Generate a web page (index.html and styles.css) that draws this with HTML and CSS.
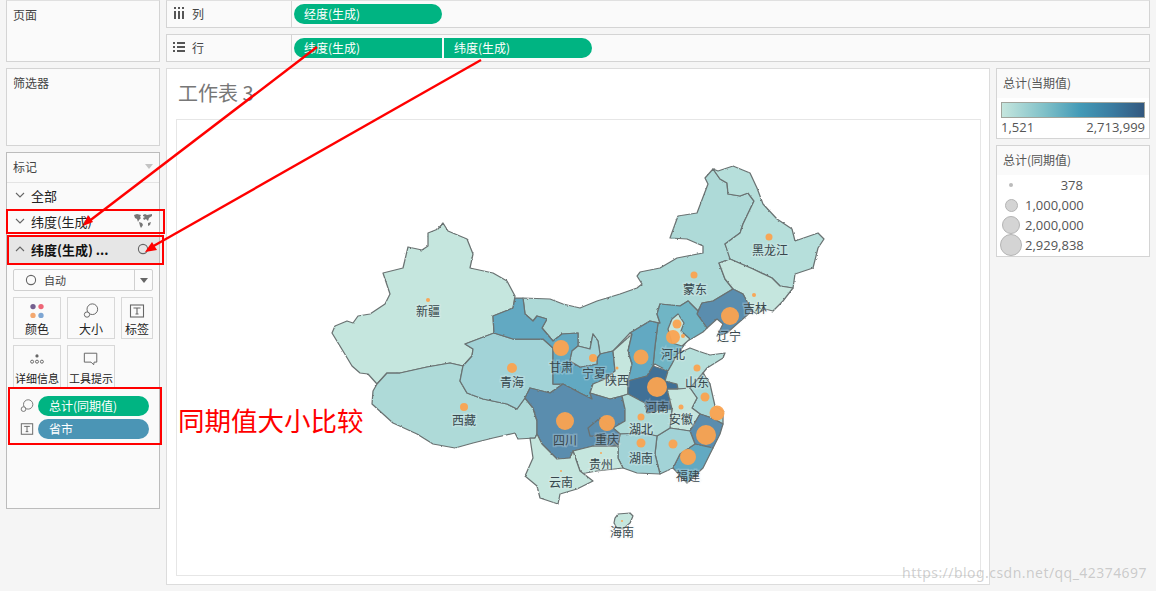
FILE: index.html
```html
<!DOCTYPE html>
<html lang="zh">
<head>
<meta charset="utf-8">
<title>工作表 3</title>
<link rel="stylesheet" href="styles.css">
</head>
<body>
<div class="app">
  <aside class="side">
    <section class="card pages"><h3 class="card-title">页面</h3></section>
    <section class="card filters"><h3 class="card-title">筛选器</h3></section>
    <section class="card marks">
      <div class="marks-head"><span>标记</span><i class="tri tri-light"></i></div>
      <div class="mark-row">
        <svg class="chev" viewBox="0 0 10 6"><path d="M1 1l4 4 4-4"/></svg><span>全部</span>
      </div>
      <div class="mark-row">
        <svg class="chev" viewBox="0 0 10 6"><path d="M1 1l4 4 4-4"/></svg><span>纬度(生成)</span>
        <svg class="world" viewBox="0 0 18 14"><path d="M0 1l3-1 4 1-1 2 1 1-2 2-1 2-1-3-2-1zM5 8l3 1 1 2-2 3-1-2zM9 1l2-1 2 1 5-1v2l-3 2-1 3-2-2-2 1-1-2 2-1-2-1zM14 9l3-1-1 3-2 1z"/></svg>
      </div>
      <div class="mark-row mark-row-active">
        <svg class="chev" viewBox="0 0 10 6"><path d="M1 5l4-4 4 4"/></svg><b>纬度(生成) ...</b>
        <svg class="ring" viewBox="0 0 12 12"><circle cx="6" cy="6" r="4.6"/></svg>
      </div>
      <div class="mark-body">
        <div class="select">
          <span class="select-label"><svg class="ring" viewBox="0 0 12 12"><circle cx="6" cy="6" r="4.6"/></svg>自动</span>
          <span class="select-btn"><i class="tri"></i></span>
        </div>
        <div class="tiles">
          <div class="tile tile-wide">
            <svg class="tile-icon" viewBox="0 0 18 18"><circle class="c1" cx="4.5" cy="4" r="3"/><circle class="c2" cx="13.5" cy="4" r="3"/><circle class="c3" cx="4.5" cy="14" r="3"/><circle class="c4" cx="13.5" cy="14" r="3"/></svg>
            <span>颜色</span>
          </div>
          <div class="tile tile-wide">
            <svg class="tile-icon line" viewBox="0 0 18 18"><circle cx="10.5" cy="7" r="6"/><circle class="fill-w" cx="4.5" cy="13" r="3"/></svg>
            <span>大小</span>
          </div>
          <div class="tile tile-narrow">
            <svg class="tile-icon line" viewBox="0 0 16 16"><rect x="1.5" y="2" width="13" height="12"/><path d="M5 5.5V5h6v.5M8 5v6M6.5 11h3"/></svg>
            <span>标签</span>
          </div>
          <div class="tile tile-wide tile-clip">
            <svg class="tile-icon line" viewBox="0 0 18 18"><circle class="fill-d" cx="9" cy="5.5" r="1.8"/><circle cx="3.5" cy="12" r="1.7"/><circle cx="9" cy="12" r="1.7"/><circle cx="14.5" cy="12" r="1.7"/></svg>
            <span>详细信息</span>
          </div>
          <div class="tile tile-wide tile-clip">
            <svg class="tile-icon line" viewBox="0 0 18 18"><path d="M1.500 2.500h14v10h-3l-.5 3-3-3h-7.500z"/></svg>
            <span>工具提示</span>
          </div>
        </div>
        <div class="pill-list">
          <div class="pill-row">
            <svg class="pill-icon line" viewBox="0 0 18 18"><circle cx="10.500" cy="7" r="6"/><circle class="fill-w" cx="4.500" cy="13" r="3"/></svg>
            <span class="pill pill-green">总计(同期值)</span>
          </div>
          <div class="pill-row">
            <svg class="pill-icon line" viewBox="0 0 16 16"><rect x="1.500" y="2" width="13" height="12"/><path d="M5 5.500V5h6v.5M8 5v6M6.500 11h3"/></svg>
            <span class="pill pill-blue">省市</span>
          </div>
        </div>
      </div>
    </section>
  </aside>

  <main class="work">
    <div class="shelf">
      <div class="shelf-name">
        <svg class="shelf-icon" viewBox="0 0 12 12"><path d="M1 4h2v8H1zM1 0h2v2H1zM5 4h2v8H5zM5 0h2v2H5zM9 4h2v8H9zM9 0h2v2H9z"/></svg><span>列</span>
      </div>
      <div class="shelf-pills"><span class="pill pill-green pill-shelf">经度(生成)</span></div>
    </div>
    <div class="shelf">
      <div class="shelf-name">
        <svg class="shelf-icon" viewBox="0 0 12 12"><path d="M0 1h2v2H0zM4 1h8v2H4zM0 5h2v2H0zM4 5h8v2H4zM0 9h2v2H0zM4 9h8v2H4z"/></svg><span>行</span>
      </div>
      <div class="shelf-pills">
        <span class="pill pill-green pill-shelf pill-left">纬度(生成)</span>
        <span class="pill pill-green pill-shelf pill-right">纬度(生成)</span>
      </div>
    </div>
    <div class="content">
      <section class="sheet">
        <h1 class="sheet-title">工作表 3</h1>
        <div class="map-frame">
          <svg class="map" viewBox="176 119 804 456" width="804" height="456">
            <defs>
              <filter id="rough" x="-2%" y="-2%" width="104%" height="104%">
                <feTurbulence type="fractalNoise" baseFrequency="0.3" numOctaves="2" seed="4"/>
                <feDisplacementMap in="SourceGraphic" scale="2" xChannelSelector="R" yChannelSelector="G"/>
              </filter>
            </defs>
            <g class="regions" filter="url(#rough)">
              <polygon class="p-a" points="443,222 448,230 467,238 473,253 470,267 493,272 507,280 515,295 513,307 493,315 494,332 465,343 473,348 472,355 463,365 450,362 427,366 400,372 387,372 377,383 368,373 360,372 352,365 343,350 332,332 335,325 347,320 353,322 358,315 370,313 385,303 390,293 383,272 403,267 408,246 422,249 428,245 428,232 438,228"/>
              <polygon class="p-c" points="377,383 387,372 400,372 427,366 450,362 463,365 460,380 467,392 483,398 507,403 517,408 525,397 533,407 537,420 537,433 535,437 518,438 515,432 493,437 473,442 455,447 433,443 417,433 393,422 372,403 373,390"/>
              <polygon class="p-d" points="465,343 494,332 513,338 543,338 553,347 553,383 563,383 550,392 530,387 525,397 517,408 507,403 483,398 467,392 460,380 463,365 472,355 473,348"/>
              <polygon class="p-c" points="523,297 550,298 563,303 580,307 597,300 620,293 637,287 642,283 637,275 640,271 660,267 677,257 703,252 703,245 687,238 670,237 678,215 697,212 708,183 705,177 713,168 720,178 727,182 728,193 740,195 748,192 754,200 743,223 740,232 725,243 733,257 719,262 725,278 733,288 713,300 702,302 698,310 688,300 680,305 660,303 657,313 660,322 650,320 630,332 613,350 600,353 598,340 593,333 590,348 578,345 578,332 562,333 553,340 542,327 547,318 537,315 533,320 525,313"/>
              <polygon class="p-g" points="515,297 523,297 525,313 533,320 537,315 547,318 542,327 553,340 562,333 578,332 578,345 572,350 570,360 580,366 587,365 597,363 597,357 600,353 613,350 615,370 605,378 593,383 590,392 592,398 580,392 567,385 563,383 553,383 553,347 543,338 513,338 494,332 493,315 513,307"/>
              <polygon class="p-d" points="578,345 590,348 593,333 598,340 600,353 597,357 597,363 587,365 580,366 570,360 572,350"/>
              <polygon class="p-a" points="632,333 628,350 632,363 628,380 628,393 622,395 610,398 590,392 593,383 605,378 615,370 613,350"/>
              <polygon class="p-b" points="713,168 718,170 733,165 750,172 757,187 763,203 777,218 792,228 795,240 818,232 824,238 818,247 813,267 795,273 793,287 780,285 772,277 753,268 730,258 725,243 740,232 743,223 754,200 748,192 740,195 728,193 727,182 720,178"/>
              <polygon class="p-a" points="719,262 730,258 753,268 772,277 780,285 793,287 783,300 773,310 765,308 757,313 752,310 743,293 733,288 725,278"/>
              <polygon class="p-h" points="733,288 743,293 752,310 737,323 727,332 717,335 723,323 717,318 707,327 697,313 702,302 713,300"/>
              <polygon class="p-f" points="657,313 660,303 680,305 688,300 698,310 697,313 707,327 703,331 693,337 687,340 680,350 672,363 668,370 655,363 653,365 655,345 658,322 660,322"/>
              <polygon class="p-a" points="672,318 678,313 684,322 681,330 690,338 682,345 672,342 668,328"/>
              <polygon class="p-g" points="630,332 650,320 658,322 655,345 653,365 647,375 628,380 632,363 628,350 632,333"/>
              <polygon class="p-h" points="525,397 530,387 550,392 563,383 567,385 580,392 592,398 590,392 610,398 622,395 625,408 625,420 613,427 620,433 618,445 593,445 573,450 570,457 557,458 542,443 537,433 537,420 533,407"/>
              <polygon class="p-i" points="628,380 647,375 653,365 668,370 665,380 677,383 678,388 667,388 672,408 647,412 645,402 628,393"/>
              <polygon class="p-b" points="668,370 672,363 677,353 690,347 698,350 710,354 725,352 723,357 707,367 703,372 710,383 690,387 678,388 677,383 665,380"/>
              <polygon class="p-e" points="703,372 710,383 715,405 723,410 723,423 712,417 700,413 692,407 697,397 690,387"/>
              <polygon class="p-a" points="667,388 678,388 690,387 697,397 692,407 700,413 690,430 670,427 672,408"/>
              <polygon class="p-h" points="700,413 712,417 723,423 720,433 713,447 695,443 690,430"/>
              <polygon class="p-g" points="680,453 695,443 713,447 703,467 687,482 673,467"/>
              <polygon class="p-d" points="657,435 670,427 690,430 695,443 680,453 673,467 660,473 655,453"/>
              <polygon class="p-c" points="613,427 625,420 625,408 622,395 628,393 645,402 647,412 672,408 670,427 657,435 643,432 620,433"/>
              <polygon class="p-d" points="620,433 643,432 657,435 655,453 660,473 637,472 623,467 618,457 618,445"/>
              <polygon class="p-h" points="588,427 600,417 613,427 620,433 618,445 603,435 590,435"/>
              <polygon class="p-a" points="573,450 593,445 618,445 618,457 623,467 597,470 580,473 580,470"/>
              <polygon class="p-a" points="530,437 535,437 537,433 542,443 557,458 570,457 573,450 580,470 593,480 577,488 560,493 558,503 540,497 537,485 525,475 533,457"/>
              <polygon class="p-a" points="615,517 618,513 630,512 633,515 630,522 623,528 617,527 614,522"/>
            </g>
            <g class="dots">
              <circle cx="428" cy="299" r="2"/><circle cx="464" cy="406" r="4"/><circle cx="512" cy="367" r="5"/>
              <circle cx="561" cy="347" r="8"/><circle cx="593" cy="357" r="4"/><circle cx="617" cy="367" r="1.500"/>
              <circle cx="769" cy="236" r="3.500"/><circle cx="694" cy="274" r="3.500"/><circle cx="754" cy="294" r="2"/>
              <circle cx="730" cy="315" r="9"/><circle cx="677" cy="323" r="4.500"/><circle cx="673" cy="336" r="7"/>
              <circle cx="683" cy="335" r="2"/><circle cx="641" cy="356" r="7.500"/><circle cx="657" cy="386" r="10"/>
              <circle cx="697" cy="367" r="3.500"/><circle cx="705" cy="396" r="4.500"/><circle cx="717" cy="412" r="7.500"/>
              <circle cx="681" cy="406" r="2.500"/><circle cx="641" cy="416" r="3.500"/><circle cx="607" cy="422" r="8"/>
              <circle cx="565" cy="420" r="9"/><circle cx="601" cy="452" r="1"/><circle cx="641" cy="442" r="4.500"/>
              <circle cx="673" cy="443" r="4.500"/><circle cx="706" cy="434" r="10"/><circle cx="688" cy="456" r="8"/>
              <circle cx="561" cy="470" r="1"/><circle cx="622" cy="520" r="1"/>
            </g>
            <g class="labels">
              <text x="428" y="315">新疆</text><text x="464" y="424">西藏</text><text x="512" y="386">青海</text>
              <text x="561" y="371">甘肃</text><text x="594" y="377">宁夏</text><text x="617" y="384">陕西</text>
              <text x="770" y="254">黑龙江</text><text x="695" y="293">蒙东</text><text x="755" y="312">吉林</text>
              <text x="729" y="340">辽宁</text><text x="673" y="358">河北</text><text x="697" y="386">山东</text>
              <text x="657" y="411">河南</text><text x="681" y="423">安徽</text><text x="641" y="433">湖北</text>
              <text x="565" y="444">四川</text><text x="607" y="443">重庆</text><text x="601" y="468">贵州</text>
              <text x="641" y="462">湖南</text><text x="688" y="480">福建</text><text x="561" y="486">云南</text>
              <text x="622" y="536">海南</text>
            </g>
          </svg>
        </div>
      </section>
      <aside class="legends">
        <section class="legend">
          <h3 class="legend-title">总计(当期值)</h3>
          <div class="ramp"></div>
          <div class="ramp-labels"><span>1,521</span><span>2,713,999</span></div>
        </section>
        <section class="legend">
          <h3 class="legend-title">总计(同期值)</h3>
          <div class="size-row"><span class="size-cell"><i class="size-dot s1"></i></span><span class="size-num">378</span></div>
          <div class="size-row"><span class="size-cell"><i class="size-dot s2"></i></span><span class="size-num">1,000,000</span></div>
          <div class="size-row"><span class="size-cell"><i class="size-dot s3"></i></span><span class="size-num">2,000,000</span></div>
          <div class="size-row"><span class="size-cell"><i class="size-dot s4"></i></span><span class="size-num">2,929,838</span></div>
        </section>
      </aside>
    </div>
  </main>
</div>

<svg class="overlay" viewBox="0 0 1156 591" width="1156" height="591">
  <rect class="box" x="7" y="210" width="157" height="23"/>
  <rect class="box" x="8" y="236" width="155" height="28"/>
  <rect class="box" x="9" y="388" width="152" height="56"/>
  <path class="arrow" d="M317 47L88 222"/>
  <path class="arrow-head" d="M83 226l5-11 5 7z"/>
  <path class="arrow" d="M481 60L150 248"/>
  <path class="arrow-head" d="M145 252l7-10 5 8z"/>
</svg>
<div class="note">同期值大小比较</div>
<div class="watermark">https://blog.csdn.net/qq_42374697</div>
</body>
</html>
```
FILE: styles.css
```css
* { box-sizing: border-box; }
html, body { margin: 0; padding: 0; }
body {
  width: 1156px;
  height: 591px;
  overflow: hidden;
  position: relative;
  background: #f5f5f5;
  color: #333;
  font-family: "Noto Sans CJK SC", "Noto Sans", sans-serif;
  font-size: 12px;
}
h1, h3 { margin: 0; font-weight: 400; }
i { display: block; }
.app { display: flex; gap: 6px; padding: 0 6px 0 6px; height: 591px; }
.side { width: 154px; flex: none; display: flex; flex-direction: column; gap: 6px; }
.card { background: #fafafa; border: 1px solid #d4d4d4; }
.card-title { font-size: 12px; line-height: 16px; padding: 6px; color: #444; }
.pages { height: 62px; border-top-color: #e0e0e0; }
.filters { height: 78px; }
.marks { height: 357px; border-color: #bcbcbc; }
.marks-head {
  height: 30px;
  display: flex;
  align-items: center;
  justify-content: space-between;
  padding: 0 6px 2px;
  color: #444;
  border-bottom: 1px solid #e4e4e4;
}
.tri { width: 0; height: 0; border: 4px solid transparent; border-top: 5px solid #666; border-bottom: 0; }
.tri-light { border-top-color: #c4c4c4; }
.mark-row {
  display: flex;
  align-items: center;
  height: 26px;
  padding: 0 6px 2px 8px;
  font-size: 13px;
  color: #222;
  gap: 6px;
}
.mark-row-active { height: 28px; margin-top: 1px; background: #e6e6e6; color: #111; }
.chev { width: 10px; height: 6px; fill: none; stroke: #666; stroke-width: 1.1; flex: none; }
.world { width: 18px; height: 14px; margin-left: auto; margin-right: 1px; fill: #777; }
.ring { width: 12px; height: 12px; fill: none; stroke: #666; stroke-width: 1.1; flex: none; }
.mark-row-active .ring { margin-left: auto; margin-right: 4px; }
.mark-body { padding: 5px 6px 0; }
.select {
  display: flex;
  height: 22px;
  border: 1px solid #d0d0d0;
  background: #fbfbfb;
  border-radius: 2px;
}
.select-label { flex: 1; display: flex; align-items: center; gap: 7px; padding-left: 11px; font-size: 11px; color: #444; }
.select-btn { width: 18px; border-left: 1px solid #d0d0d0; display: flex; align-items: center; justify-content: center; }
.tiles { display: grid; grid-template-columns: 48px 48px 32px; gap: 6px; margin-top: 6px; }
.tile {
  height: 42px;
  border: 1px solid #d8d8d8;
  display: flex;
  flex-direction: column;
  align-items: center;
  padding-top: 5px;
  font-size: 12px;
  line-height: 16px;
  color: #222;
  white-space: nowrap;
}
.tile-clip { overflow: hidden; border-bottom: 0; font-size: 11px; letter-spacing: 0; }
.tile-icon { width: 16px; height: 16px; flex: none; margin-bottom: 2px; }
.tile-clip .tile-icon { margin-bottom: 3px; }
.c1 { fill: #75608f; } .c2 { fill: #ee6677; } .c3 { fill: #f3a870; } .c4 { fill: #7ea6d3; }
.line { fill: none; stroke: #666; stroke-width: 1.1; }
.fill-w { fill: #fafafa; }
.fill-d { fill: #666; stroke: none; }
.pill-list { display: flex; flex-direction: column; gap: 3px; margin-top: 9px; }
.pill-row { display: flex; align-items: center; gap: 4px; padding-left: 7px; }
.pill-icon { width: 14px; height: 14px; flex: none; }
.pill {
  display: block;
  height: 20px;
  line-height: 20px;
  border-radius: 10px;
  color: #fff;
  font-size: 12px;
  padding-left: 11px;
  white-space: nowrap;
}
.pill-row .pill { width: 111px; }
.pill-green { background: #00b482; }
.pill-blue { background: #4b95b5; }
.work { flex: 1; display: flex; flex-direction: column; gap: 6px; min-width: 0; }
.shelf {
  height: 28px;
  display: flex;
  background: #fafafa;
  border: 1px solid #d4d4d4;
}
.shelf:first-child { border-top-color: #e0e0e0; }
.shelf-name {
  width: 125px;
  flex: none;
  display: flex;
  align-items: center;
  gap: 7px;
  padding: 0 0 2px 6px;
  border-right: 1px solid #d4d4d4;
  color: #444;
}
.shelf-icon { width: 12px; height: 12px; fill: #555; }
.shelf-pills { display: flex; gap: 2px; align-items: center; padding-left: 2px; }
.pill-shelf { width: 148px; padding-left: 10px; }
.pill-left { border-radius: 10px 0 0 10px; }
.pill-right { border-radius: 0 10px 10px 0; }
.content { flex: 1; display: flex; gap: 6px; min-height: 0; }
.sheet {
  width: 824px;
  height: 517px;
  flex: none;
  background: #fff;
  border: 1px solid #dcdcdc;
  padding: 0 9px;
}
.sheet-title { height: 50px; padding: 9px 2px 0; font-size: 20px; line-height: 30px; color: #777; }
.map-frame { width: 805px; height: 457px; border: 1px solid #e6e6e6; }
.map { display: block; margin: 0 0 0 -1px; }
.regions polygon { stroke: #6a7272; stroke-width: 1.250; stroke-linejoin: round; }
.p-a { fill: #c5e6de; }
.p-b { fill: #b6dfdb; }
.p-c { fill: #aedad8; }
.p-d { fill: #a2d3d7; }
.p-e { fill: #a8d8d9; }
.p-f { fill: #6fb5c5; }
.p-g { fill: #62a9c2; }
.p-h { fill: #5a8dae; }
.p-i { fill: #3f6f96; }
.dots circle { fill: #fba350; fill-opacity: .95; }
.labels text {
  font-size: 12px;
  text-anchor: middle;
  fill: #38474d;
  stroke: rgba(236,240,240,.25);
  stroke-width: 3px;
  paint-order: stroke;
}
.legends { width: 154px; flex: none; display: flex; flex-direction: column; gap: 6px; }
.legend { background: #fff; border: 1px solid #d4d4d4; }
.legend-title { height: 29px; padding-left: 6px; font-size: 12px; line-height: 27px; background: #fafafa; color: #555; }
.ramp {
  height: 16px;
  margin: 4px 4px 0;
  border: 1px solid #a0a49c;
  background: linear-gradient(90deg, #c5e6de 0%, #7fc0c8 30%, #439ab7 55%, #3a7ba0 78%, #33587f 100%);
}
.ramp-labels { display: flex; justify-content: space-between; padding: 0 4px; height: 19px; line-height: 19px; color: #555; font-size: 13px; font-family: "Open Sans", "Noto Sans", sans-serif; }
.size-row { display: flex; align-items: center; height: 20px; color: #555; font-size: 13px; font-family: "Open Sans", "Noto Sans", sans-serif; }
.size-cell { width: 28px; display: flex; justify-content: center; }
.size-num { width: 58px; text-align: right; }
.size-dot { border-radius: 50%; background: #d4d4d4; border: 1.500px solid #b4b4b4; }
.s1 { width: 4px; height: 4px; background: #bbb; border: 0; }
.s2 { width: 13px; height: 13px; }
.s3 { width: 18px; height: 18px; }
.s4 { width: 22px; height: 22px; }
.legend:last-child { height: 112px; overflow: hidden; }
.legend:first-child { height: 71px; }
.overlay { position: absolute; left: 0; top: 0; pointer-events: none; }
.box { fill: none; stroke: #f00; stroke-width: 2; }
.arrow { fill: none; stroke: #f00; stroke-width: 2.400; }
.arrow-head { fill: #f00; }
.note { position: absolute; left: 178px; top: 400px; font-size: 26.500px; line-height: 40px; color: #f00; }
.watermark { position: absolute; right: 9px; top: 563px; font-size: 14px; line-height: 20px; color: rgba(150,150,150,.45); font-family: "Noto Sans", sans-serif; letter-spacing: .45px; }
```
